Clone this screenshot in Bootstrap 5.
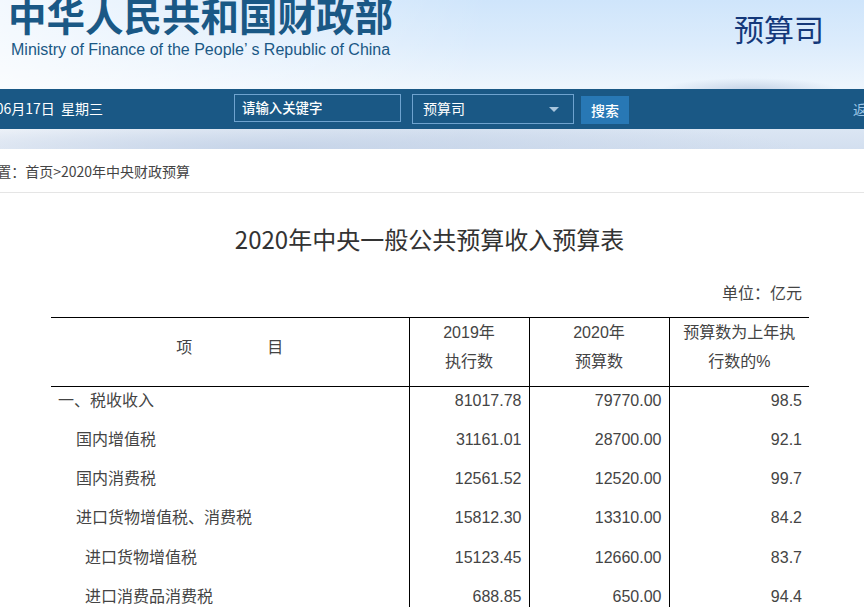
<!DOCTYPE html>
<html lang="zh-CN">
<head>
<meta charset="utf-8">
<title>2020年中央一般公共预算收入预算表</title>
<link rel="stylesheet" href="https://cdn.jsdelivr.net/npm/bootstrap@5.3.0/dist/css/bootstrap.min.css">
<style>
html,body{height:607px;overflow:hidden;background:#fff}
body{font-family:"Liberation Sans","Noto Sans CJK SC",sans-serif;color:#333}
.page-top{height:149px;background:
 radial-gradient(ellipse 90px 12px at 750px 90px,#c3d2e6 0,rgba(195,210,230,0) 100%),
 radial-gradient(ellipse 520px 30px at 280px 148px,#c6d4e8 0,rgba(198,212,232,0) 100%),
 linear-gradient(100deg,rgba(255,255,255,.75) 0,rgba(255,255,255,0) 55%),
 linear-gradient(180deg,#cfe5fb 0,#dcecfc 30%,#edf5fd 58%,#e4edf8 72%,#d3dfef 100%)}
.head-row{height:89px;overflow:hidden}
.logo-box{margin-left:8px;margin-top:-5px;width:500px}
.logo-cn{font-family:"Noto Sans CJK SC",sans-serif;font-weight:700;font-size:38.5px;line-height:38px;color:#1a5885;white-space:nowrap}
.logo-en{font-size:16px;line-height:18px;color:#1a5885;margin-left:3px;white-space:nowrap;margin-top:8px}
.dept{font-family:"Noto Sans CJK SC",sans-serif;font-size:30px;line-height:40px;color:#14387a;margin-top:8px;margin-right:40px}
.bar{height:40px;background:#1a5885;color:#fff;font-family:"Noto Sans CJK SC",sans-serif;font-size:14px}
.date-clip{width:103px;overflow:hidden;white-space:nowrap;padding-bottom:2px}
.kw{width:167px;height:28px;margin-left:131px;margin-top:5px;border:1px solid #6fa3cf;padding:0 7px;line-height:24px;font-weight:500;font-size:13.4px;align-self:flex-start}
.sel{width:162px;height:30px;margin-left:11px;border:1px solid #6fa3cf;padding:0 10px 2px}
.tri{width:0;height:0;border-left:5px solid transparent;border-right:5px solid transparent;border-top:5px solid #a9c6dd;margin-top:2px}
.go{width:48px;height:28px;margin-left:7px;background:#2878b5;color:#fff;border:0;padding:0;font-size:14px;font-weight:500;margin-top:2px;border-radius:0}
.back{margin-left:auto;width:11px;overflow:hidden;white-space:nowrap;color:#9cc6e8}
.crumb{height:44px;padding-top:2px;border-bottom:1px solid #e5e5e5;font-family:"Noto Sans CJK SC",sans-serif;font-size:14px;color:#444;white-space:nowrap;overflow:hidden}
.crumb-clip{width:190px}
.doc-title{font-family:"Noto Sans CJK SC",sans-serif;font-size:24px;font-weight:400;line-height:32px;color:#333;text-align:center;margin:30px 0 0 -5px}
.unit{width:802px;text-align:right;font-family:"Noto Sans CJK SC",sans-serif;font-size:16px;line-height:20px;margin-top:27px;color:#444}
.budget{width:758px;margin:15px 0 0 51px;border-collapse:collapse;table-layout:fixed;font-family:"Liberation Sans","Noto Sans CJK SC",sans-serif;font-size:16px;color:#444}
.budget th,.budget td{font-weight:400;padding:0 7px;height:39.3px;line-height:20px;vertical-align:top;padding-top:4px;border:0}
.budget td+td,.budget th+th{border-left:1px solid #000;text-align:right}
.budget thead th{border-top:1px solid #000;border-bottom:1px solid #000;height:69px;line-height:29px;text-align:center;vertical-align:middle;padding:0 0 10px}
.budget thead th+th{text-align:center}
.item-gap{display:inline-block;width:75px}
.i1{padding-left:25px!important}.i2{padding-left:34px!important}
</style>
</head>
<body>
<div class="page-top">
  <div class="head-row d-flex justify-content-between">
    <div class="logo-box">
      <div class="logo-cn">中华人民共和国财政部</div>
      <div class="logo-en">Ministry of Finance of the People’ s Republic of China</div>
    </div>
    <div class="dept">预算司</div>
  </div>
  <div class="bar d-flex align-items-center">
    <div class="date-clip d-flex justify-content-end">2020年06月17日&nbsp;&nbsp;星期三</div>
    <div class="kw">请输入关键字</div>
    <div class="sel d-flex align-items-center justify-content-between"><span>预算司</span><span class="tri me-1"></span></div>
    <button class="btn go" type="button">搜索</button>
    <div class="back">返回首页</div>
  </div>
</div>
<div class="crumb d-flex align-items-center">
  <div class="crumb-clip d-flex justify-content-end">当前位置：首页&gt;2020年中央财政预算</div>
</div>
<h1 class="doc-title">2020年中央一般公共预算收入预算表</h1>
<div class="unit">单位：亿元</div>
<table class="budget">
  <colgroup><col style="width:358px"><col style="width:120px"><col style="width:140px"><col style="width:140px"></colgroup>
  <thead>
    <tr><th>项<span class="item-gap"></span>目</th><th>2019年<br>执行数</th><th>2020年<br>预算数</th><th>预算数为上年执<br>行数的%</th></tr>
  </thead>
  <tbody>
    <tr><td>一、税收收入</td><td>81017.78</td><td>79770.00</td><td>98.5</td></tr>
    <tr><td class="i1">国内增值税</td><td>31161.01</td><td>28700.00</td><td>92.1</td></tr>
    <tr><td class="i1">国内消费税</td><td>12561.52</td><td>12520.00</td><td>99.7</td></tr>
    <tr><td class="i1">进口货物增值税、消费税</td><td>15812.30</td><td>13310.00</td><td>84.2</td></tr>
    <tr><td class="i2">进口货物增值税</td><td>15123.45</td><td>12660.00</td><td>83.7</td></tr>
    <tr><td class="i2">进口消费品消费税</td><td>688.85</td><td>650.00</td><td>94.4</td></tr>
  </tbody>
</table>
<script src="https://cdn.jsdelivr.net/npm/bootstrap@5.3.0/dist/js/bootstrap.bundle.min.js"></script>
</body>
</html>
